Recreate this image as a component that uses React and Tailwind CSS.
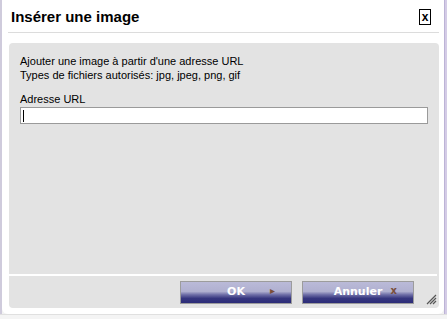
import React from "react";

const btnBg =
  "bg-[linear-gradient(to_bottom,#babad8_0%,#b0b0d0_45%,#7070a8_60%,#36367f_78%,#2c2c78_100%)]";

const App = () => {
  return (
    <div className="w-[447px] h-[319px] bg-[#f2f2f2] flex flex-col overflow-hidden font-['Liberation_Sans',Arial,sans-serif]">
      <div className="flex h-[314px]">
        <div className="w-[2px] bg-[#cfcbdc]" />
        {/* dialog */}
        <div className="w-[442px] bg-white rounded-b-[6px] flex flex-col">
          <div className="h-[32px] flex items-center justify-between pl-[9px] pr-[13px]">
            <h1 className="text-[15px] font-bold text-black leading-none mt-[1px]">Insérer une image</h1>
            <button className="w-[12px] h-[16px] border border-black flex items-center justify-center text-[12px] font-bold leading-none text-black mt-[2px]">
              x
            </button>
          </div>
          <div className="ml-[6px] mr-[5px] h-[1px] bg-[#dcdcdc]" />
          <div className="mt-[10px] ml-[7px] mr-[5px] h-[265px] bg-[#e3e3e3] rounded-[4px] flex flex-col">
            <div className="h-[231px] px-[11px] pt-[11px] text-[11px] text-black leading-[14px]">
              <p>Ajouter une image à partir d'une adresse URL</p>
              <p>Types de fichiers autorisés: jpg, jpeg, png, gif</p>
              <p className="mt-[10px]">Adresse URL</p>
              <div className="mt-[1px] h-[17px] bg-white border border-[#9a9a9a] flex items-center pl-[2px]">
                <span className="w-[1px] h-[12px] bg-black" />
              </div>
            </div>
            <div className="h-[2px] bg-white mr-[2px]" />
            <div className="flex-1 relative flex items-start justify-end gap-[10px] pr-[25px] pt-[5px]">
              {[
                ["OK", "▸"],
                ["Annuler", "x"],
              ].map(([label, icon]) => (
                <button
                  key={label}
                  className={`w-[112px] h-[23px] border border-[#9c9c9c] ${btnBg} flex items-center justify-center relative text-white text-[11px] font-bold font-['DejaVu_Sans',sans-serif]`}
                >
                  {label}
                  <span className="absolute right-[16px] top-[4px] text-[10px] text-[#7a4f3a] leading-none">{icon}</span>
                </button>
              ))}
              <svg className="absolute right-[2px] bottom-[3px]" width="11" height="11" viewBox="0 0 11 11">
                <path d="M10 1 L1 10 M10 4 L4 10 M10 7 L7 10" stroke="#555" strokeWidth="1.2" />
              </svg>
            </div>
          </div>
        </div>
        <div className="w-[3px] bg-[#d4cce6] border-l border-[#bdb3d6]" />
      </div>
      <div className="h-[5px] bg-[#f4f4f4] border-t border-[#e0e0e0]" />
    </div>
  );
};

export default App;
